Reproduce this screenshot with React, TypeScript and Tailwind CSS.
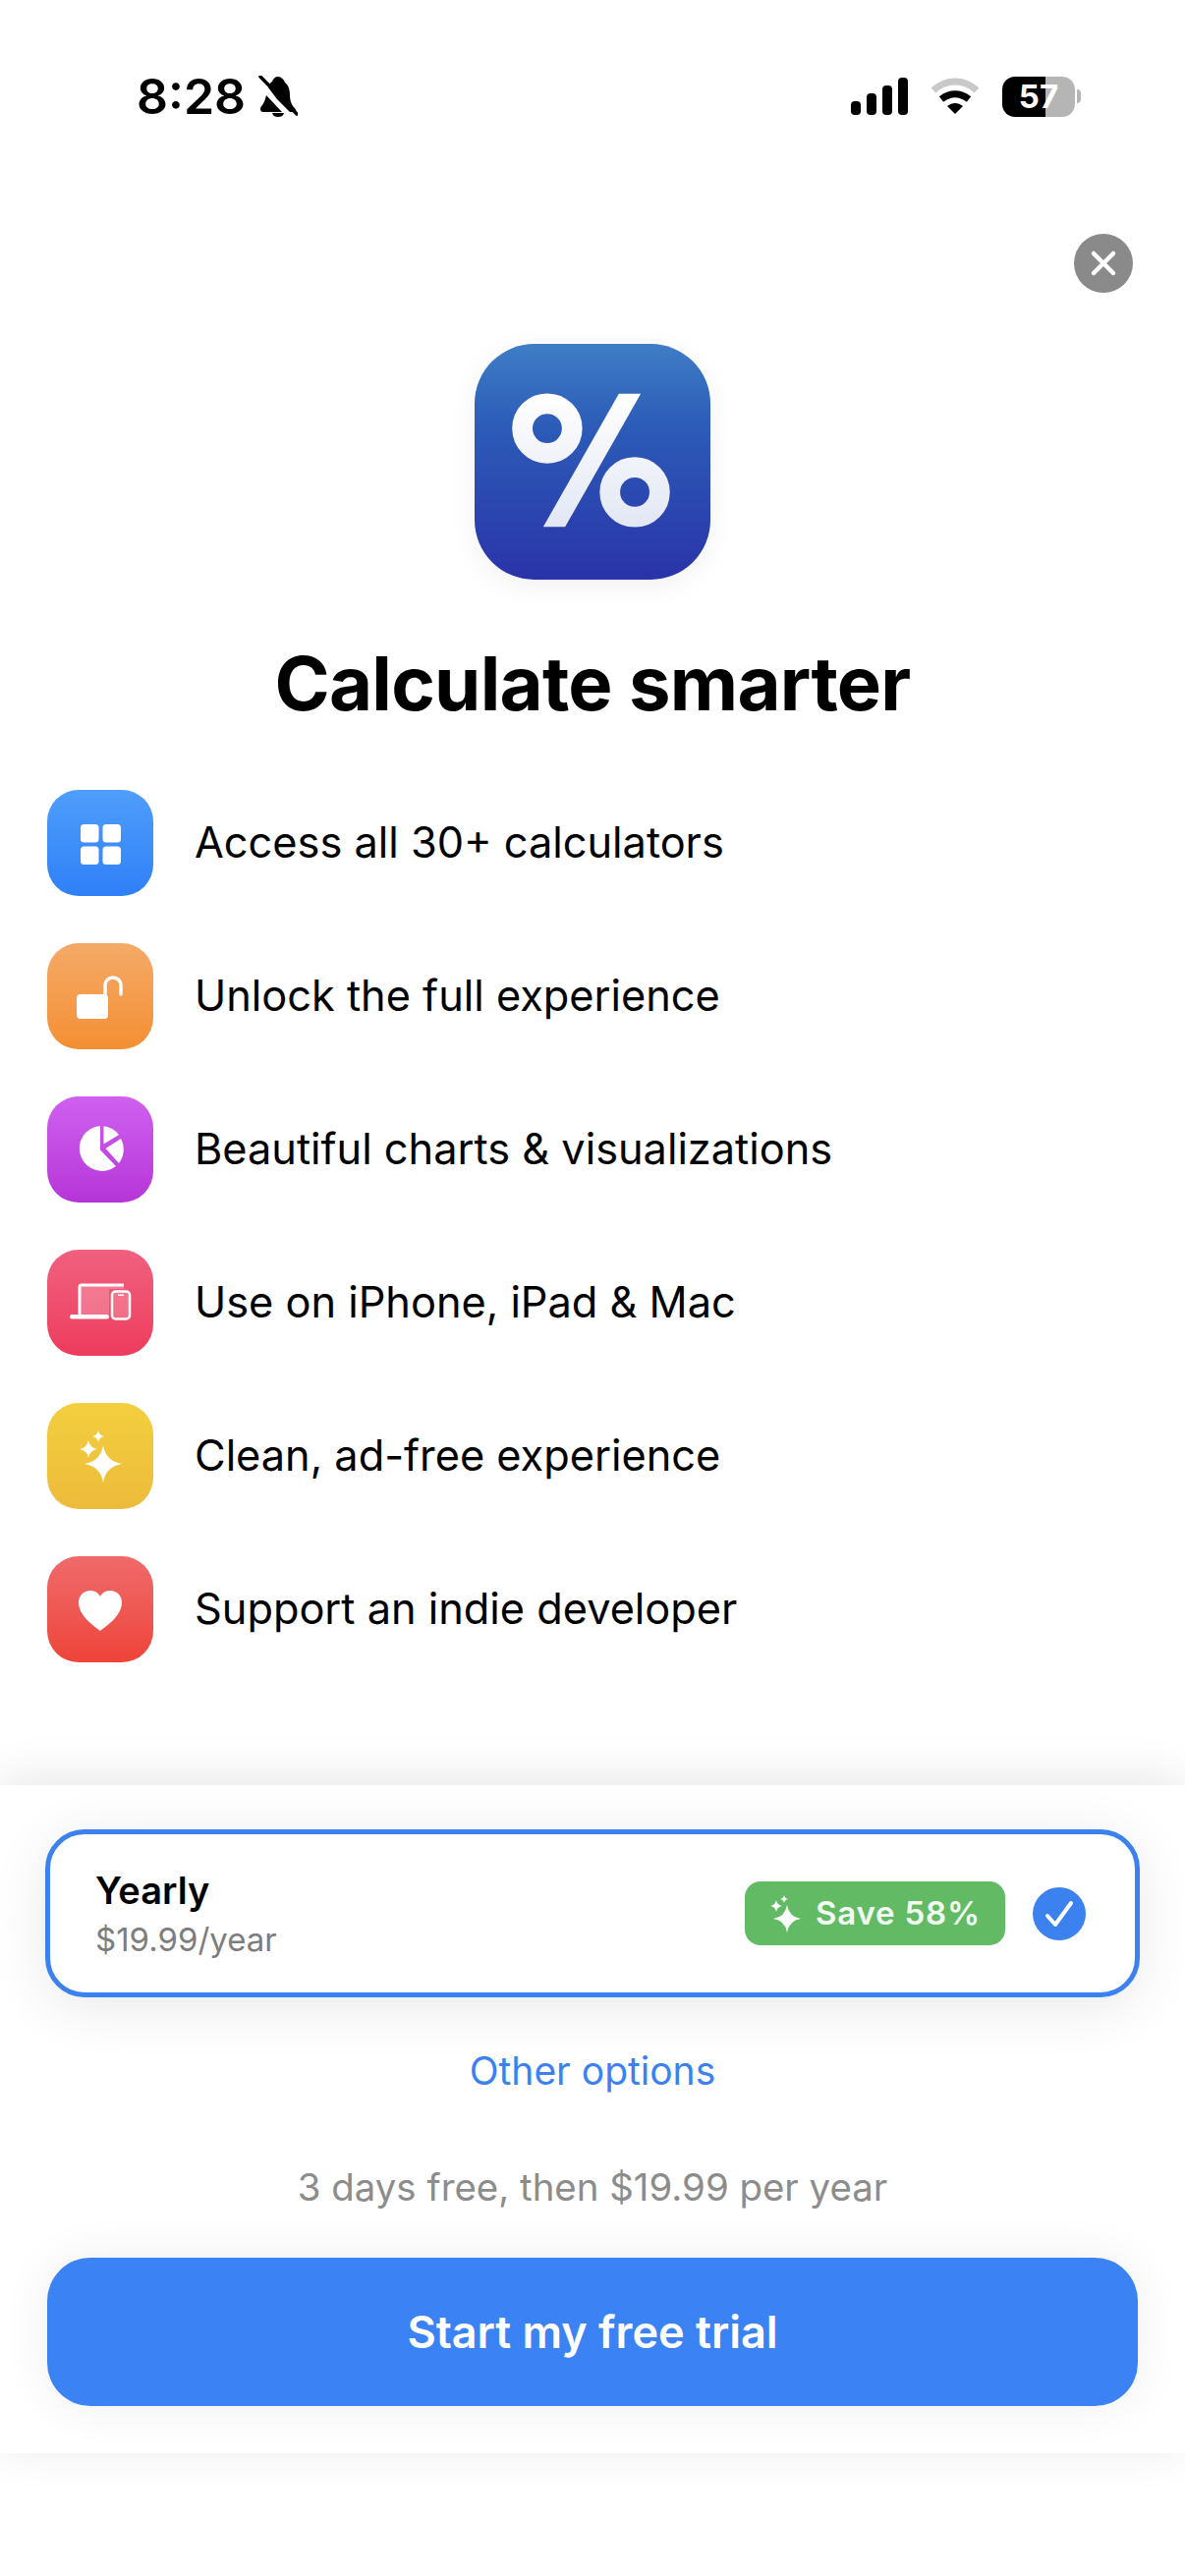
import type { ReactNode } from 'react';

function starPath(cx: number, cy: number, r: number) {
    const k = r * 0.14;
    return `M${cx} ${cy - r}Q${cx + k} ${cy - k} ${cx + r} ${cy}Q${cx + k} ${cy + k} ${cx} ${cy + r}Q${cx - k} ${cy + k} ${cx - r} ${cy}Q${cx - k} ${cy - k} ${cx} ${cy - r}Z`;
}

function StatusBar() {
    return (
        <div className="flex h-[42px] items-center justify-between pl-[139px] pr-[106px] mt-[77px]">
            <div className="flex items-center gap-[13px]">
                <span className="text-[50px] leading-none font-semibold text-black">8:28</span>
                <svg width="40" height="42" viewBox="0 0 40 42">
                    <path d="M20 1c-3 0-5 2-6 5-2 1-3 3-4 6L19 24l13 13h6c1-2-1-4-3-6-2-3-3-7-3-11 0-5-1-10-5-13-1-3-4-6-7-6ZM2 34c0 2 1 3 3 3h19L8 20c-1 4-2 7-4 10-1 1-2 2-2 4ZM14 38c1 3 3 4 6 4s5-1 6-4H14Z" fill="#000" />
                    <path d="M2 1l37 38" stroke="#000" strokeWidth="3.5" strokeLinecap="round" />
                </svg>
            </div>
            <div className="flex items-center">
                <svg width="58" height="38" viewBox="0 0 58 38">
                    <rect x="0" y="24" width="10" height="14" rx="4" fill="#000" />
                    <rect x="16" y="16" width="10" height="22" rx="4" fill="#000" />
                    <rect x="32" y="8" width="10" height="30" rx="4" fill="#000" />
                    <rect x="48" y="0" width="10" height="38" rx="4" fill="#000" />
                </svg>
                <svg width="50" height="38" viewBox="0 0 50 38" className="ml-[23px]">
                    <path d="M3 13C16 1 34 1 47 13" fill="none" stroke="#c9c9c9" strokeWidth="7" strokeLinecap="butt" />
                    <path d="M11 22c9-7 19-7 28 0" fill="none" stroke="#000" strokeWidth="7" />
                    <path d="M17 29c5-4 11-4 16 0l-8 8Z" fill="#000" />
                </svg>
                <div className="ml-[23px] flex items-center">
                    <div className="flex h-[41px] w-[74px] items-center justify-center rounded-[13px] bg-[linear-gradient(90deg,#000_60%,#b5b5b5_60%)]">
                        <span className="text-[33px] leading-none font-bold text-white">57</span>
                    </div>
                    <div className="ml-[2px] h-[14px] w-[4px] rounded-r-full bg-[#b5b5b5]" />
                </div>
            </div>
        </div>
    );
}

function AppLogo() {
    return (
        <div className="mt-[52px] flex justify-center">
            <svg width="240" height="240" viewBox="0 0 237 237" className="drop-shadow-[0_6px_12px_rgba(0,0,0,0.06)]">
                <defs>
                    <linearGradient id="logoBg" x1="0" y1="0" x2="0" y2="1">
                        <stop offset="0" stopColor="#3f7dc6" />
                        <stop offset="0.35" stopColor="#2c5cb8" />
                        <stop offset="1" stopColor="#2a33a8" />
                    </linearGradient>
                    <linearGradient id="glyph" gradientUnits="userSpaceOnUse" x1="0" y1="50" x2="0" y2="184">
                        <stop offset="0" stopColor="#ffffff" />
                        <stop offset="1" stopColor="#e2e7f4" />
                    </linearGradient>
                </defs>
                <rect width="237" height="237" rx="60" fill="url(#logoBg)" />
                <circle cx="73" cy="85" r="25" fill="none" stroke="url(#glyph)" strokeWidth="20.5" />
                <circle cx="161" cy="149" r="25" fill="none" stroke="url(#glyph)" strokeWidth="20.5" />
                <path d="M145 50h22L91 184H69Z" fill="url(#glyph)" />
            </svg>
        </div>
    );
}

function FeatureIcon({ className, children }: { className: string; children: ReactNode }) {
    return (
        <div className={`h-[108px] w-[108px] shrink-0 rounded-[32px] bg-linear-to-b ${className}`}>
            <svg width="108" height="108" viewBox="0 0 108 108" fill="#fff">
                {children}
            </svg>
        </div>
    );
}

const features = [
    {
        label: 'Access all 30+ calculators',
        color: 'from-[#4f9dfb] to-[#2f80f8]',
        icon: (
            <>
                <rect x="34" y="35" width="18.500" height="18.500" rx="3.500" />
                <rect x="56.500" y="35" width="18.500" height="18.500" rx="3.500" />
                <rect x="34" y="57.500" width="18.500" height="18.500" rx="3.500" />
                <rect x="56.500" y="57.500" width="18.500" height="18.500" rx="3.500" />
            </>
        ),
    },
    {
        label: 'Unlock the full experience',
        color: 'from-[#f4aa66] to-[#f48f31]',
        icon: (
            <>
                <rect x="30" y="52" width="32" height="25" rx="4" />
                <path d="M59 52V43a8 8 0 0 1 16 0v9" fill="none" stroke="#fff" strokeWidth="3.500" strokeLinecap="round" />
            </>
        ),
    },
    {
        label: 'Beautiful charts & visualizations',
        color: 'from-[#cf60f0] to-[#b634d7]',
        icon: (
            <>
                <path d="M54 30v24.500L70 71A23 23 0 1 1 54 30Z" />
                <path d="M57.500 30.200A23 23 0 0 1 73 39L57.500 48.500Z" />
                <path d="M75 43A23 23 0 0 1 73 68L59.500 53Z" />
            </>
        ),
    },
    {
        label: 'Use on iPhone, iPad & Mac',
        color: 'from-[#f0607f] to-[#ee3b5d]',
        icon: (
            <>
                <path d="M33 66V38a2 2 0 0 1 2-2h43v4H63v26Z" fill="#fff" fillOpacity="0.22" />
                <path d="M33 66V38a2 2 0 0 1 2-2h43" fill="none" stroke="#fff" strokeWidth="3" />
                <rect x="23" y="66" width="40" height="4.500" rx="2.200" />
                <rect x="66" y="42.500" width="18" height="28" rx="3.500" fill="#fff" fillOpacity="0.2" stroke="#fff" strokeWidth="2.500" />
                <rect x="72" y="45.500" width="6" height="1.500" />
            </>
        ),
    },
    {
        label: 'Clean, ad-free experience',
        color: 'from-[#f3cf3e] to-[#edbb3b]',
        icon: (
            <>
                <path d={starPath(57, 62, 19)} />
                <path d={starPath(42, 47, 9)} />
                <path d={starPath(52, 34, 6)} />
            </>
        ),
    },
    {
        label: 'Support an indie developer',
        color: 'from-[#ef6a6a] to-[#ee4339]',
        icon: <path d="M54 76C46 70 32 60 32 47c0-7 5-12 12-12 4 0 8 2 10 6 2-4 6-6 10-6 7 0 12 5 12 12 0 13-14 23-22 29Z" />,
    },
];

export default function App() {
    return (
        <div className="h-[2622px] w-[1206px] overflow-hidden bg-white font-['Inter',sans-serif]">
            <StatusBar />

            <div className="mt-[119px] flex justify-end pr-[53px]">
                <button className="flex h-[60px] w-[60px] items-center justify-center rounded-full bg-[#8a8a8a]">
                    <svg width="28" height="28" viewBox="0 0 28 28" fill="none" stroke="#fff" strokeWidth="4.500" strokeLinecap="round">
                        <path d="M4 4l20 20M24 4L4 24" />
                    </svg>
                </button>
            </div>

            <AppLogo />

            <h1 className="mt-[50px] text-center text-[76px] leading-[110px] font-bold tracking-[-0.75px] text-black">Calculate smarter</h1>

            <div className="mt-[54px] flex flex-col gap-[48px] pl-[48px]">
                {features.map(f => (
                    <div key={f.label} className="flex items-center gap-[42px]">
                        <FeatureIcon className={f.color}>{f.icon}</FeatureIcon>
                        <span className="text-[43.3px] leading-none text-black">{f.label}</span>
                    </div>
                ))}
            </div>

            <div className="mt-[125px] h-[680px] bg-white px-[46px] pt-[45px] shadow-[0_-6px_44px_rgba(0,0,0,0.1)]">
                <div className="flex h-[171px] items-center rounded-[40px] border-[5px] border-[#3b82f0] bg-white pr-[50px] pl-[46px] shadow-[0_10px_60px_rgba(0,0,0,0.09)]">
                    <div className="flex-1">
                        <div className="text-[38px] leading-[46px] font-semibold text-black">Yearly</div>
                        <div className="mt-[7px] text-[33px] leading-[40px] text-[#7d7d7d]">$19.99/year</div>
                    </div>
                    <div className="flex h-[65px] w-[265px] items-center gap-[14px] rounded-[16px] bg-[#62bb64] pl-[26px]">
                        <svg width="32" height="38" viewBox="0 0 32 38" fill="#fff">
                            <path d={starPath(17, 24, 14)} />
                            <path d={starPath(6, 11, 6)} />
                            <path d={starPath(14, 4, 4)} />
                        </svg>
                        <span className="text-[33px] leading-none font-semibold tracking-[0.8px] text-[#f2fbf1]">Save 58%</span>
                    </div>
                    <div className="ml-[28px] flex h-[54px] w-[54px] items-center justify-center rounded-full bg-[#3b82f0]">
                        <svg width="30" height="28" viewBox="0 0 30 28" fill="none" stroke="#fff" strokeWidth="4" strokeLinecap="round" strokeLinejoin="round">
                            <path d="M3 16l8 9L27 3" />
                        </svg>
                    </div>
                </div>

                <div className="mt-[50px] text-center text-[39px] leading-[50px] text-[#3b82f0]">Other options</div>
                <div className="mt-[68px] text-center text-[38.4px] leading-[50px] text-[#8c8c8c]">3 days free, then $19.99 per year</div>

                <button className="mt-[47px] ml-[2px] flex h-[151px] w-[1110px] items-center justify-center rounded-[44px] bg-[#3b82f4] text-[45px] font-semibold text-white shadow-[0_0_50px_rgba(0,0,0,0.07)]">
                    Start my free trial
                </button>
            </div>
        </div>
    );
}
